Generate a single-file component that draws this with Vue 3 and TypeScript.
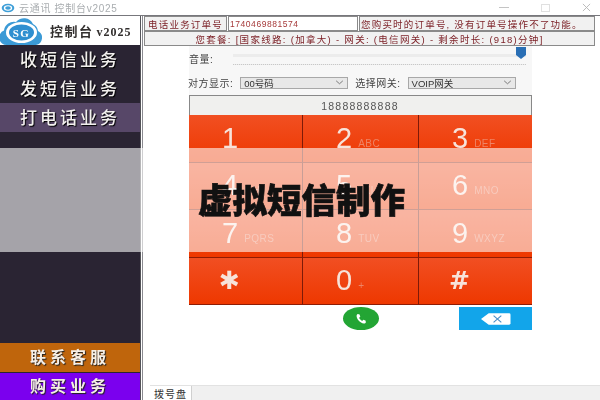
<template>
  <div class="window">
    <div class="content">
      <div class="titlebar">
        <svg class="title-logo" viewBox="0 0 20 14">
          <ellipse cx="10" cy="7" rx="9" ry="6" fill="#3f9fd8" />
          <ellipse cx="10" cy="7" rx="6" ry="4" fill="#fff" />
          <ellipse cx="10" cy="7" rx="4" ry="2.600" fill="#3f9fd8" />
        </svg>
        <span class="title-text">云通讯 控制台v2025</span>
        <div class="win-btns">
          <span class="win-min"></span>
          <span class="win-max"></span>
          <svg class="win-close" viewBox="0 0 10 10"><path d="M1 1l8 8M9 1l-8 8" stroke="#b5b5b5" stroke-width="1" /></svg>
        </div>
      </div>

      <div class="body">
        <aside class="sidebar">
          <div class="brand">
            <svg class="brand-logo" viewBox="0 0 44 30">
              <path d="M7 29a7.500 7.500 0 0 1-3-14.500A10 10 0 0 1 16 6a10 10 0 0 1 17 2a9 9 0 0 1 5 7a7.500 7.500 0 0 1-2 14z" fill="#3b9ad6" />
              <ellipse cx="21.500" cy="16.500" rx="15.500" ry="10.500" fill="#fff" />
              <ellipse cx="21.500" cy="16.500" rx="12.500" ry="8" fill="#2f8fd0" />
              <text x="21.500" y="20.500" text-anchor="middle" class="brand-sg">SG</text>
            </svg>
            <span class="brand-name">控制台<span class="brand-ver">v2025</span></span>
          </div>
          <div
            v-for="item in menuItems"
            :key="item.label"
            class="menu-item"
            :class="{ active: item.active }"
          >
            {{ item.label }}
          </div>
          <div class="side-spacer"></div>
          <div class="side-btn contact">联系客服</div>
          <div class="side-btn buy">购买业务</div>
        </aside>

        <main class="main">
          <div class="order-row">
            <span class="cell order-label">电话业务订单号</span>
            <span class="cell order-no">1740469881574</span>
            <span class="cell order-tip">您购买时的订单号, 没有订单号操作不了功能。</span>
          </div>
          <div class="cell package">您套餐: [国家线路: (加拿大) - 网关: (电信网关) - 剩余时长: (918)分钟]</div>

          <div class="dial">
            <div class="volume">
              <span class="field-label volume-label">音量:</span>
              <div class="track">
                <svg class="thumb" viewBox="0 0 10 12"><path d="M0 0h10v8l-5 4-5-4z" fill="#2a6fb5" /></svg>
              </div>
            </div>
            <div class="selects">
              <span class="field-label">对方显示:</span>
              <div class="select">00号码<svg class="chevron" viewBox="0 0 10 6"><path d="M1 1l4 3.500L9 1" fill="none" stroke="#666" /></svg></div>
              <span class="field-label gateway">选择网关:</span>
              <div class="select">VOIP网关<svg class="chevron" viewBox="0 0 10 6"><path d="M1 1l4 3.500L9 1" fill="none" stroke="#666" /></svg></div>
            </div>
            <div class="number">18888888888</div>
            <div class="keypad">
              <div v-for="key in keys" :key="key.num" class="key">
                <span class="key-num" :class="{ symbol: key.symbol }">{{ key.num }}</span>
                <span class="key-sub">{{ key.sub }}</span>
              </div>
            </div>
            <div class="actions">
              <div class="call">
                <svg viewBox="0 0 24 24" class="call-icon">
                  <path d="M6.600 3.500l3 .6 1.200 4-2 1.800c.9 2.300 2.800 4.300 5.200 5.400l1.900-2 3.800 1.200.7 3.100c-.5 1.300-2 2.400-3.600 2.200C10.400 19 4.700 13 4.400 7c-.1-1.500 1-3 2.200-3.500z" fill="#fff" />
                </svg>
              </div>
              <div class="backspace">
                <svg viewBox="0 0 32 14" class="back-icon">
                  <path d="M9 1h21a1.500 1.500 0 0 1 1.500 1.500v9A1.500 1.500 0 0 1 30 13H9L1 7z" fill="#fff" />
                  <path d="M14 3.500l8 7M22 3.500l-8 7" stroke="#4a8fc8" stroke-width="1.200" />
                </svg>
              </div>
            </div>
          </div>

          <div class="tabs">
            <span class="tab">拨号盘</span>
          </div>
        </main>
      </div>
    </div>

    <div class="band"><span class="band-text">虚拟短信制作</span></div>
  </div>
</template>

<script setup lang="ts">
interface MenuItem {
  label: string
  active?: boolean
}

interface DialKey {
  num: string
  sub: string
  symbol?: boolean
}

const menuItems: MenuItem[] = [
  { label: '收短信业务' },
  { label: '发短信业务' },
  { label: '打电话业务', active: true },
]

const keys: DialKey[] = [
  { num: '1', sub: '' },
  { num: '2', sub: 'ABC' },
  { num: '3', sub: 'DEF' },
  { num: '4', sub: 'GHI' },
  { num: '5', sub: 'JKL' },
  { num: '6', sub: 'MNO' },
  { num: '7', sub: 'PQRS' },
  { num: '8', sub: 'TUV' },
  { num: '9', sub: 'WXYZ' },
  { num: '✱', sub: '', symbol: true },
  { num: '0', sub: '+' },
  { num: '#', sub: '', symbol: true },
]
</script>

<style>
html,
body {
  margin: 0;
  background: #fff;
}
</style>

<style scoped>
.window {
  position: relative;
  width: 600px;
  height: 400px;
  overflow: hidden;
  background: #fff;
  font-family: "Liberation Sans", "Noto Sans CJK SC", sans-serif;
}

/* the reference is a soft, upscaled capture */
.content {
  height: 100%;
  display: flex;
  flex-direction: column;
  filter: blur(0.35px);
}

/* title bar */
.titlebar {
  height: 15px;
  flex: none;
  display: flex;
  align-items: center;
  padding-left: 1px;
  color: #a9adb0;
  font-size: 10px;
  letter-spacing: 0.700px;
}

.title-logo {
  width: 14px;
  height: 10px;
  margin-right: 4px;
}

.win-btns {
  margin-left: auto;
  display: flex;
  align-items: center;
  gap: 32px;
  padding-right: 9px;
}

.win-min {
  width: 10px;
  height: 1px;
  background: #c4c4c4;
}

.win-max {
  width: 9px;
  height: 8px;
  border: 1px solid #e0e0e0;
  box-sizing: border-box;
}

.win-close {
  width: 9px;
  height: 9px;
}

.body {
  flex: 1;
  display: flex;
  min-height: 0;
  border-top: 1px solid #77777c;
}

/* sidebar */
.sidebar {
  box-sizing: border-box;
  width: 141px;
  flex: none;
  display: flex;
  flex-direction: column;
  background: #2a2433;
  border-right: 1px solid #55555a;
  box-shadow: 1px 0 0 #fff, 2px 0 0 #8a8a90;
}

.brand {
  height: 29px;
  background: #fff;
  display: flex;
  align-items: center;
  color: #33302f;
  font-size: 13px;
  font-weight: 700;
  letter-spacing: 1.500px;
  white-space: nowrap;
}

.brand-logo {
  width: 44px;
  height: 30px;
  margin-right: 6px;
  flex: none;
}

.brand-ver {
  margin-left: 3px;
  font-family: "Liberation Serif", serif;
  font-size: 12px;
  letter-spacing: 1px;
}

.brand-sg {
  font-family: "Liberation Serif", serif;
  font-size: 11px;
  font-weight: 700;
  fill: #fff;
}

.menu-item {
  height: 29px;
  box-sizing: border-box;
  display: flex;
  align-items: center;
  padding-left: 20px;
  padding-bottom: 3px;
  color: #f2f0ee;
  font-size: 17px;
  font-weight: 500;
  letter-spacing: 3px;
  white-space: nowrap;
  text-shadow: 1px 1px 1px #000;
}

.menu-item.active {
  background: #574768;
}

.side-spacer {
  flex: 1;
}

.side-btn {
  box-sizing: border-box;
  height: 29px;
  display: flex;
  align-items: center;
  justify-content: center;
  padding-bottom: 3px;
  color: #f6efe6;
  font-size: 16px;
  font-weight: 700;
  letter-spacing: 4px;
  text-shadow: 1px 1px 1px #222;
}

.side-btn.contact {
  background: #bf650c;
}

.side-btn.buy {
  background: #7b00ee;
  border-top: 1px solid #2a2433;
  height: 28px;
}

/* main */
.main {
  flex: 1;
  min-width: 0;
  margin-left: 3px;
  display: flex;
  flex-direction: column;
}

.order-row {
  display: flex;
  gap: 1px;
  height: 15px;
  flex: none;
  color: #7d2228;
  font-size: 9.500px;
}

.cell {
  box-sizing: border-box;
  border: 1px solid #8a8a8a;
  background: #f1f1f1;
  display: flex;
  align-items: center;
  white-space: nowrap;
}

.order-label {
  width: 83px;
  justify-content: center;
  letter-spacing: 1.200px;
}

.order-no {
  width: 130px;
  padding-left: 1px;
  background: #fff;
  color: #a63a3a;
  font-size: 8.500px;
  letter-spacing: 0.550px;
}

.order-tip {
  width: 236px;
  padding-left: 1px;
  letter-spacing: 1.200px;
}

.package {
  width: 451px;
  height: 15px;
  flex: none;
  justify-content: center;
  color: #7d2228;
  font-size: 9.500px;
  letter-spacing: 1.300px;
}

.dial {
  width: 343px;
  margin-left: 45px;
  background: #f7f7f7;
  display: flex;
  flex-direction: column;
}

.field-label {
  font-size: 10px;
  color: #444;
  letter-spacing: 0.500px;
  white-space: nowrap;
}

.volume {
  height: 26px;
  flex: none;
  display: flex;
  align-items: center;
}

.volume-label {
  margin-bottom: 2px;
}

.track {
  position: relative;
  flex: 1;
  margin-left: 20px;
  margin-right: 6px;
  height: 10px;
  border-bottom: 1px dotted #c8c8c8;
  background: linear-gradient(#ececec 0 3px, transparent 3px);
}

.thumb {
  position: absolute;
  right: 0;
  top: -7px;
  width: 10px;
  height: 12px;
}

.selects {
  height: 21px;
  flex: none;
  margin-bottom: 2px;
  display: flex;
  align-items: center;
  margin-left: -1px;
}

.select {
  box-sizing: border-box;
  width: 108px;
  height: 12px;
  margin-left: 7px;
  border: 1px solid #a8a8a8;
  background: #e8e8e8;
  display: flex;
  align-items: center;
  padding-left: 3px;
  color: #333;
  font-size: 9.500px;
}

.gateway {
  margin-left: 7px;
}

.chevron {
  margin-left: auto;
  margin-right: 3px;
  width: 9px;
  height: 5px;
}

.number {
  box-sizing: border-box;
  height: 20px;
  flex: none;
  border: 1px solid #888;
  border-bottom: 0;
  background: #f0f0ee;
  display: flex;
  align-items: center;
  justify-content: center;
  padding-right: 1px;
  color: #555;
  font-size: 10.500px;
  letter-spacing: 1.200px;
}

.keypad {
  display: grid;
  grid-template-columns: 114px 116px 113px;
  grid-auto-rows: 47.500px;
  flex: none;
}

.key {
  box-sizing: border-box;
  display: flex;
  align-items: center;
  gap: 6px;
  padding-left: 33px;
  background: linear-gradient(#f14f22, #ee3800);
  border-right: 1px solid #7d1a08;
  border-bottom: 1px solid #8f1c04;
  color: #fff;
}

.key:nth-child(3n) {
  border-right: 0;
}

.key-num {
  font-size: 29px;
  color: #f7e3da;
  line-height: 1;
}

.key-num.symbol {
  font-family: "DejaVu Sans", sans-serif;
  font-size: 25px;
  font-weight: 700;
  margin-left: -3px;
}

.key-sub {
  font-size: 10px;
  letter-spacing: 0.500px;
  color: #ee8465;
  padding-top: 10px;
}

.actions {
  height: 25px;
  flex: none;
  display: flex;
  align-items: center;
  justify-content: flex-end;
  padding-top: 1px;
  background: #fff;
}

.call {
  width: 36px;
  height: 23px;
  border-radius: 50%;
  background: #23a534;
  margin-right: 80px;
  display: flex;
  align-items: center;
  justify-content: center;
}

.call-icon {
  width: 14px;
  height: 14px;
}

.backspace {
  width: 73px;
  height: 23px;
  background: #12a5ea;
  display: flex;
  align-items: center;
  justify-content: center;
}

.back-icon {
  width: 31px;
  height: 14px;
}

.tabs {
  margin-top: auto;
  height: 14px;
  flex: none;
  margin-left: 6px;
  background: #f0f0f0;
  border-top: 1px solid #e2e2e2;
  display: flex;
}

.tab {
  width: 41px;
  background: #fff;
  border-right: 1px solid #d0d0d0;
  color: #333;
  font-size: 10px;
  letter-spacing: 1px;
  display: flex;
  align-items: center;
  justify-content: center;
}

/* overlay band */
.band {
  position: absolute;
  left: 0;
  right: 0;
  top: 148px;
  height: 104px;
  box-sizing: border-box;
  background: rgba(255, 255, 255, 0.58);
  display: flex;
  align-items: center;
  padding-left: 198px;
  padding-bottom: 4px;
}

.band-text {
  color: #111;
  font-family: "Noto Sans CJK SC", sans-serif;
  font-size: 34.500px;
  font-weight: 900;
  -webkit-text-stroke: 0.7px #111;
}
</style>
